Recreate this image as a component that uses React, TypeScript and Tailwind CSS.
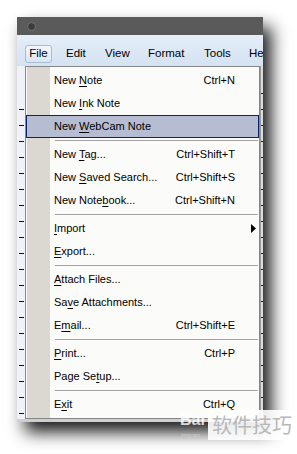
import React from "react";

type MenuItem =
  | { sep: true }
  | {
      sep?: false;
      pre: string;
      u: string;
      post: string;
      shortcut?: string;
      sub?: boolean;
      active?: boolean;
    };

const items: MenuItem[] = [
  { pre: "New ", u: "N", post: "ote", shortcut: "Ctrl+N" },
  { pre: "New ", u: "I", post: "nk Note" },
  { pre: "New ", u: "W", post: "ebCam Note", active: true },
  { sep: true },
  { pre: "New ", u: "T", post: "ag...", shortcut: "Ctrl+Shift+T" },
  { pre: "New ", u: "S", post: "aved Search...", shortcut: "Ctrl+Shift+S" },
  { pre: "New Note", u: "b", post: "ook...", shortcut: "Ctrl+Shift+N" },
  { sep: true },
  { pre: "", u: "I", post: "mport", sub: true },
  { pre: "", u: "E", post: "xport..." },
  { sep: true },
  { pre: "", u: "A", post: "ttach Files..." },
  { pre: "Sa", u: "v", post: "e Attachments..." },
  { pre: "E", u: "m", post: "ail...", shortcut: "Ctrl+Shift+E" },
  { sep: true },
  { pre: "", u: "P", post: "rint...", shortcut: "Ctrl+P" },
  { pre: "Page Se", u: "t", post: "up..." },
  { sep: true },
  { pre: "E", u: "x", post: "it", shortcut: "Ctrl+Q" },
];

const menuBar = [
  { label: "File", w: "w-[41px]" },
  { label: "Edit", w: "w-[39px]" },
  { label: "View", w: "w-[43px]" },
  { label: "Format", w: "w-[56px]" },
  { label: "Tools", w: "w-[45px]" },
  { label: "Help", w: "w-[40px]" },
];

// tick marks on the rulers behind the menu, every 16px
const ticks = Array.from({ length: 20 }, (_, i) => i);

const Ruler = ({ side }: { side: "left" | "right" }) => {
  return (
    <div
      className={
        side === "left"
          ? "w-[8px] bg-[#f1f2f9] flex flex-col items-end pt-[43px] gap-[15px] pr-[1px]"
          : "w-[3px] bg-[#dcdcdc] border-l border-[#9a9a9a] flex flex-col items-end pt-[27px] gap-[15px]"
      }
    >
      {ticks.map((t) => (
        <div
          key={t}
          className={
            side === "left"
              ? "h-[1px] w-[5px] bg-[#111]"
              : "h-[1px] w-[2px] bg-[#222]"
          }
        />
      ))}
    </div>
  );
};

const Row = ({ item }: { item: Exclude<MenuItem, { sep: true }> }) => {
  return (
    <div
      className={
        "h-[23px] flex items-center pl-[27px] pr-[2px] border " +
        (item.active
          ? "bg-[#b6bdd2] border-[#0a246a]"
          : "border-transparent")
      }
    >
      <span className="whitespace-nowrap">
        {item.pre}
        <span className="underline underline-offset-[2px]">{item.u}</span>
        {item.post}
      </span>
      <span className="flex-1" />
      <span className="whitespace-nowrap">{item.shortcut}</span>
      <span className="w-[21px] flex justify-end">
        {item.sub ? (
          <svg width="5" height="9" viewBox="0 0 5 9">
            <polygon points="0,0 5,4.5 0,9" fill="#000" />
          </svg>
        ) : null}
      </span>
    </div>
  );
};

export default function App() {
  return (
    <div className="relative w-[297px] h-[454px] bg-white overflow-hidden pt-[17px] pl-[17px] font-['Liberation_Sans',Arial,sans-serif]">
      <div className="w-[246px] flex flex-col shadow-[8px_10px_16px_rgba(0,0,0,0.9)] overflow-hidden">
        {/* title bar */}
        <div className="h-[18px] bg-[#5a5a5a] flex items-center pl-[10px]">
          <div className="w-[9px] h-[9px] rounded-full bg-[#3c3c3c] border border-[#767676]" />
        </div>

        {/* menu bar */}
        <div className="h-[31px] bg-[linear-gradient(to_bottom,#e6eef8,#d4e2f2)] flex items-start pt-[10px] pl-[8px] text-[11.5px] text-black">
          {menuBar.map((m, i) => (
            <div key={m.label} className={m.w + " shrink-0"}>
              {i === 0 ? (
                <div className="w-[27px] h-[18px] rounded-[3px] border border-[#a8bbd3] bg-[linear-gradient(to_bottom,#f3f7fc,#dae6f4)] flex items-center justify-center">
                  File
                </div>
              ) : (
                <div className="h-[18px] flex items-center">{m.label}</div>
              )}
            </div>
          ))}
        </div>

        {/* body */}
        <div className="flex flex-row">
          <Ruler side="left" />
          <div className="w-[235px] border border-[#868686] pt-[2px] pb-[2px] text-[11px] text-black bg-[linear-gradient(to_right,#fbfbfa_1px,#dbd8d1_1px,#dbd8d1_24px,#fbfbfa_24px)]">
            {items.map((item, i) =>
              item.sep ? (
                <div key={i} className="h-[5px] flex items-center pl-[29px] pr-[1px]">
                  <div className="h-[1px] w-full bg-[#a3a3a3]" />
                </div>
              ) : (
                <Row key={i} item={item} />
              )
            )}
          </div>
          <Ruler side="right" />
        </div>
        <div className="h-[3px] bg-[#cfcfcf]" />
      </div>

      {/* watermark */}
      <div className="absolute left-[180px] top-[412px] text-[16px] font-bold text-white/80 leading-none">
        Bai
      </div>
      <div className="absolute left-[181px] top-[432px] text-[6px] text-[#cfcfcf] leading-none">
        jingyan
      </div>
      <div className="absolute left-[208px] top-[410px] w-[89px] h-[30px] bg-white/90 flex items-center pl-[4px] text-[20px] text-[#b8b8b8] font-['Noto_Sans_CJK_SC',sans-serif] leading-none">
        软件技巧
      </div>
    </div>
  );
}
